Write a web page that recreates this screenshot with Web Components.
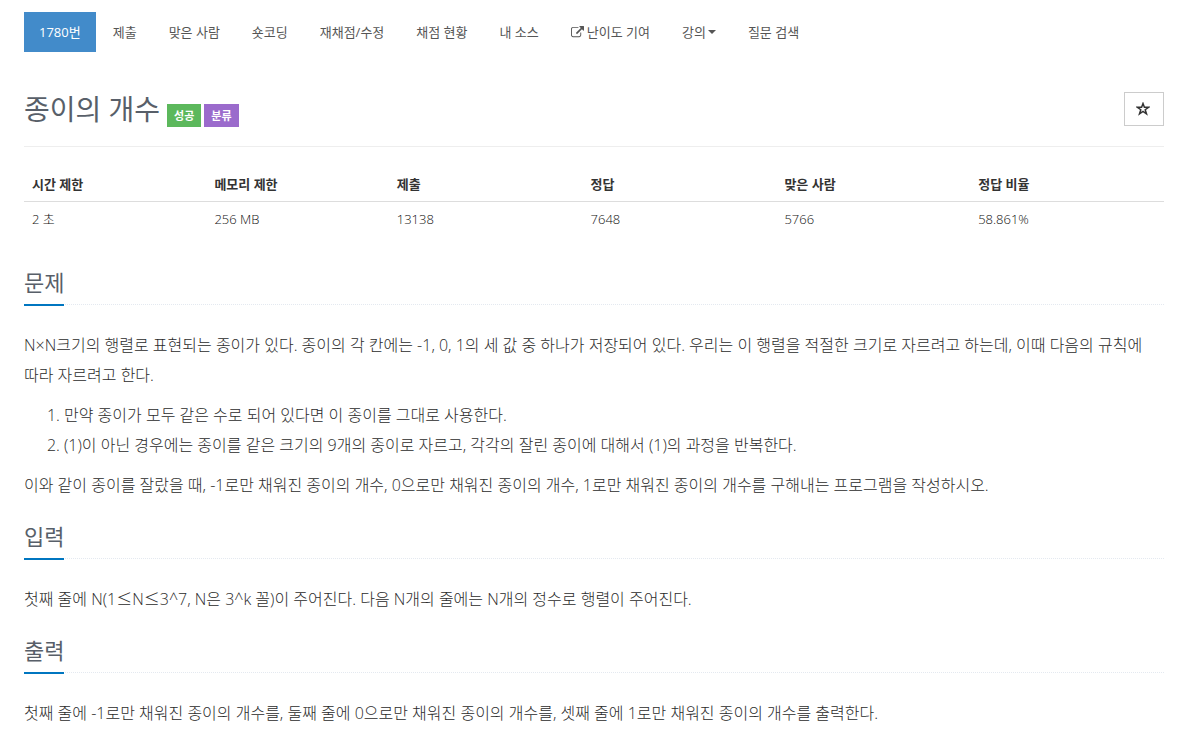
<!DOCTYPE html>
<html lang="ko">
<head>
<meta charset="utf-8">
<meta name="viewport" content="width=device-width, initial-scale=1">
<title>1780번: 종이의 개수</title>
<style>
  body {
    margin: 0;
    background: #fff;
    color: #333;
    font-family: "Open Sans", "Noto Sans CJK KR", sans-serif;
    font-size: 13px;
    line-height: 20px;
  }
  .math { font-family: "Noto Sans CJK KR", sans-serif; line-height: 1; }
</style>
</head>
<body>
<problem-page>
  <problem-nav slot="nav">
    <nav-item href="#problem" active>1780번</nav-item>
    <nav-item href="#submit">제출</nav-item>
    <nav-item href="#solved">맞은 사람</nav-item>
    <nav-item href="#short">숏코딩</nav-item>
    <nav-item href="#rejudge">재채점/수정</nav-item>
    <nav-item href="#status">채점 현황</nav-item>
    <nav-item href="#mine">내 소스</nav-item>
    <nav-item href="#level" icon="external">난이도 기여</nav-item>
    <nav-item href="#lecture" caret>강의</nav-item>
    <nav-item href="#search">질문 검색</nav-item>
  </problem-nav>

  <problem-title>
    종이의 개수
    <problem-label slot="labels" kind="success">성공</problem-label>
    <problem-label slot="labels" kind="category">분류</problem-label>
    <favorite-button slot="action"></favorite-button>
  </problem-title>

  <problem-info time="2 초" memory="256 MB" submit="13138" accepted="7648" people="5766" ratio="58.861%"></problem-info>

  <problem-section heading="문제">
    <p>N×N크기의 행렬로 표현되는 종이가 있다. 종이의 각 칸에는 -1, 0, 1의 세 값 중 하나가 저장되어 있다. 우리는 이 행렬을 적절한 크기로 자르려고 하는데, 이때 다음의 규칙에 따라 자르려고 한다.</p>
    <ol>
      <li>만약 종이가 모두 같은 수로 되어 있다면 이 종이를 그대로 사용한다.</li>
      <li>(1)이 아닌 경우에는 종이를 같은 크기의 9개의 종이로 자르고, 각각의 잘린 종이에 대해서 (1)의 과정을 반복한다.</li>
    </ol>
    <p>이와 같이 종이를 잘랐을 때, -1로만 채워진 종이의 개수, 0으로만 채워진 종이의 개수, 1로만 채워진 종이의 개수를 구해내는 프로그램을 작성하시오.</p>
  </problem-section>

  <problem-section heading="입력">
    <p>첫째 줄에 N(1<span class="math">≤</span>N<span class="math">≤</span>3^7, N은 3^k 꼴)이 주어진다. 다음 N개의 줄에는 N개의 정수로 행렬이 주어진다.</p>
  </problem-section>

  <problem-section heading="출력">
    <p>첫째 줄에 -1로만 채워진 종이의 개수를, 둘째 줄에 0으로만 채워진 종이의 개수를, 셋째 줄에 1로만 채워진 종이의 개수를 출력한다.</p>
  </problem-section>
</problem-page>

<script>
  class BaseElement extends HTMLElement {
    connectedCallback() {
      if (!this.shadowRoot) this.attachShadow({ mode: "open" }).innerHTML = this.render();
    }
    attr(name) { return this.getAttribute(name) || ""; }
  }

  customElements.define("problem-page", class extends BaseElement {
    render() {
      return `<style>
        :host { display: block; padding: 12px 26px 0 24px; }
        main { display: block; }
      </style>
      <slot name="nav"></slot><main><slot></slot></main>`;
    }
  });

  customElements.define("problem-nav", class extends BaseElement {
    render() {
      return `<style>
        :host { display: block; }
        nav { display: flex; flex-wrap: wrap; gap: 2px; }
      </style>
      <nav aria-label="문제 메뉴"><slot></slot></nav>`;
    }
  });

  customElements.define("nav-item", class extends BaseElement {
    render() {
      const icon = this.attr("icon") === "external"
        ? `<svg class="icon" viewBox="0 0 1792 1792" aria-hidden="true"><path d="M1408 928v320q0 119-84.500 203.500t-203.500 84.500h-832q-119 0-203.500-84.500t-84.500-203.500v-832q0-119 84.500-203.500t203.500-84.500h704q14 0 23 9t9 23v64q0 14-9 23t-23 9h-704q-66 0-113 47t-47 113v832q0 66 47 113t113 47h832q66 0 113-47t47-113v-320q0-14 9-23t23-9h64q14 0 23 9t9 23zm384-864v512q0 26-19 45t-45 19-45-19l-176-176-652 652q-10 10-23 10t-23-10l-114-114q-10-10-10-23t10-23l652-652-176-176q-19-19-19-45t19-45 45-19h512q26 0 45 19t19 45z"/></svg>`
        : "";
      const caret = this.hasAttribute("caret") ? `<span class="caret"></span>` : "";
      return `<style>
        :host { display: block; }
        a { display: flex; align-items: center; padding: 10px 15px; color: #555; text-decoration: none; white-space: nowrap; }
        :host([active]) a { background: #428bca; color: #fff; }
        a:hover { background: #eee; }
        :host([active]) a:hover { background: #428bca; }
        .icon { width: 13px; height: 13px; margin-right: 3px; fill: currentColor; }
        .caret { margin-left: 2px; border: 4px solid transparent; border-top-color: currentColor; border-bottom: 0; }
      </style>
      <a href="${this.attr("href")}">${icon}<slot></slot>${caret}</a>`;
    }
  });

  customElements.define("problem-title", class extends BaseElement {
    render() {
      return `<style>
        :host { display: flex; justify-content: space-between; align-items: flex-start; margin-top: 40px; padding-bottom: 19px; border-bottom: 1px solid #eee; }
        .heading { display: flex; align-items: flex-end; gap: 7px; }
        h1 { margin: 0; font-size: 28px; font-weight: 400; line-height: 35px; color: #585f69; }
        .labels { display: flex; gap: 3px; }
      </style>
      <div class="heading"><h1><slot></slot></h1><div class="labels"><slot name="labels"></slot></div></div>
      <slot name="action"></slot>`;
    }
  });

  customElements.define("problem-label", class extends BaseElement {
    render() {
      return `<style>
        :host { display: block; padding: 2px 7px 1px; color: #fff; font-size: 11px; font-weight: 700; line-height: 20px; background: #5cb85c; }
        :host([kind="category"]) { background: #9b6bcc; }
      </style><slot></slot>`;
    }
  });

  customElements.define("favorite-button", class extends BaseElement {
    render() {
      return `<style>
        :host { display: block; }
        button { display: flex; align-items: center; justify-content: center; width: 40px; height: 34px; padding: 0 2px 0 0; border: 1px solid #ccc; background: #fff; color: #333; cursor: pointer; }
        svg { width: 14px; height: 14px; fill: none; stroke: currentColor; stroke-width: 1.5; }
      </style>
      <button type="button" aria-label="즐겨찾기"><svg viewBox="0 0 14 14" aria-hidden="true"><path d="M7 1.500L8.400 5.300H12.600L9.200 7.700L10.500 11.800L7 9.300L3.500 11.800L4.800 7.700L1.400 5.300H5.600Z"/></svg></button>`;
    }
  });

  customElements.define("problem-info", class extends BaseElement {
    render() {
      const columns = [
        ["시간 제한", "time", 16], ["메모리 제한", "memory", 16], ["제출", "submit", 17],
        ["정답", "accepted", 17], ["맞은 사람", "people", 17], ["정답 비율", "ratio", 17]
      ];
      return `<style>
        :host { display: block; margin: 20px 0 27px; }
        table { width: 100%; table-layout: fixed; border-collapse: collapse; }
        th, td { padding: 7px 8px; text-align: left; }
        th { font-weight: 700; border-bottom: 1px solid #ddd; }
        td { color: #111; font-weight: 300; padding-bottom: 8px; }
      </style>
      <table>
        <colgroup>${columns.map(c => `<col style="width:${c[2]}%">`).join("")}</colgroup>
        <thead><tr>${columns.map(c => `<th scope="col">${c[0]}</th>`).join("")}</tr></thead>
        <tbody><tr>${columns.map(c => `<td>${this.attr(c[1])}</td>`).join("")}</tr></tbody>
      </table>`;
    }
  });

  customElements.define("problem-section", class extends BaseElement {
    render() {
      return `<style>
        :host { display: block; margin-top: 18px; }
        header { display: flex; margin-bottom: 25px; border-bottom: 1px dotted #e4e9f0; }
        h2 { margin: 0 0 -2px; padding-bottom: 4px; border-bottom: 2px solid #0076c0; font-size: 22px; font-weight: 400; line-height: 36px; color: #585f69; }
        .body { font-size: 16px; font-weight: 300; line-height: 30px; color: #2b2b2b; word-break: keep-all; }
        ::slotted(p) { margin: 0 0 10px; }
        ::slotted(ol) { margin: 0 0 10px; padding-left: 40px; }
        ::slotted(:last-child) { margin-bottom: 0; }
      </style>
      <section><header><h2>${this.attr("heading")}</h2></header><div class="body"><slot></slot></div></section>`;
    }
  });
</script>
</body>
</html>
